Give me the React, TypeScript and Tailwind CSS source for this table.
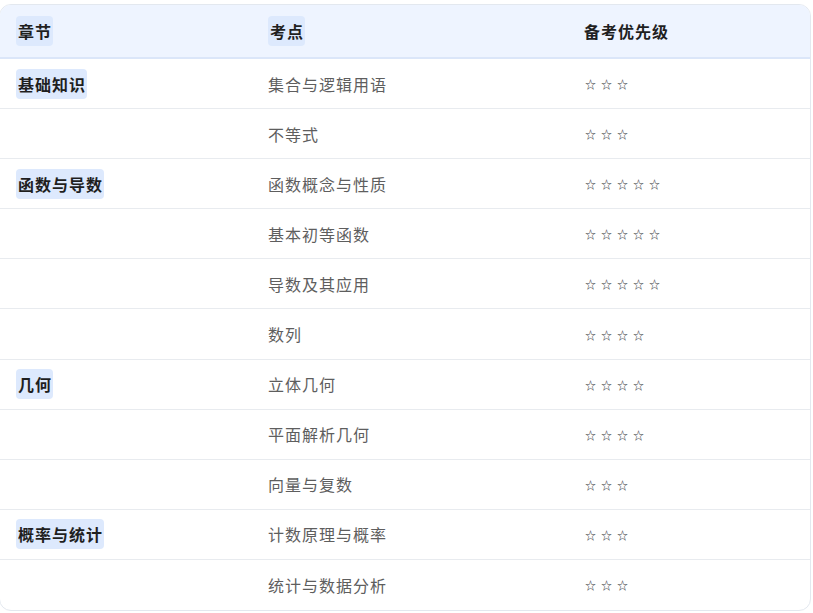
const rows: { chapter?: string; point: string; stars: number }[] = [
  { chapter: '基础知识', point: '集合与逻辑用语', stars: 3 },
  { point: '不等式', stars: 3 },
  { chapter: '函数与导数', point: '函数概念与性质', stars: 5 },
  { point: '基本初等函数', stars: 5 },
  { point: '导数及其应用', stars: 5 },
  { point: '数列', stars: 4 },
  { chapter: '几何', point: '立体几何', stars: 4 },
  { point: '平面解析几何', stars: 4 },
  { point: '向量与复数', stars: 3 },
  { chapter: '概率与统计', point: '计数原理与概率', stars: 3 },
  { point: '统计与数据分析', stars: 3 },
];

function Mark({ children }: { children: React.ReactNode }) {
  return (
    <span className="rounded-[4px] bg-[#dde9fd] py-[3px] pl-[2px] pr-[1px] font-bold text-[#1f1f1f]">
      {children}
    </span>
  );
}

function Stars({ count }: { count: number }) {
  return (
    <div className="flex items-center gap-[6px] text-[11px] leading-none text-[#2f3338]">
      {Array.from({ length: count }).map((_, i) => (
        <span key={i} className="w-[10px] text-center">
          ☆
        </span>
      ))}
    </div>
  );
}

export default function App() {
  return (
    <div
      className="h-[613px] w-[813px] bg-white pt-[4px]"
      style={{ fontFamily: '"Noto Sans CJK SC", "Noto Sans", sans-serif' }}
    >
      <div className="w-[812px] -ml-[1px] overflow-hidden rounded-[12px] border border-[#e3e8ef]">
        <div className="grid h-[54px] grid-cols-[252px_316px_1fr] items-center border-b-2 border-[#dbe6f9] bg-[#eef4ff] text-[16px] tracking-[1px]">
          <div className="pl-[16px]">
            <Mark>章节</Mark>
          </div>
          <div className="pl-[16px]">
            <Mark>考点</Mark>
          </div>
          <div className="pl-[16px] font-bold text-[#1f1f1f]">备考优先级</div>
        </div>
        {rows.map((r, i) => (
          <div
            key={i}
            className={`grid h-[50.1px] grid-cols-[252px_316px_1fr] items-center text-[16px] tracking-[1px] ${
              i < rows.length - 1 ? 'border-b border-[#e8ebef]' : ''
            }`}
          >
            <div className="pl-[16px]">{r.chapter && <Mark>{r.chapter}</Mark>}</div>
            <div className="pl-[16px] text-[#5e5e5e]">{r.point}</div>
            <div className="pl-[17px] pt-[2px]">
              <Stars count={r.stars} />
            </div>
          </div>
        ))}
      </div>
    </div>
  );
}
